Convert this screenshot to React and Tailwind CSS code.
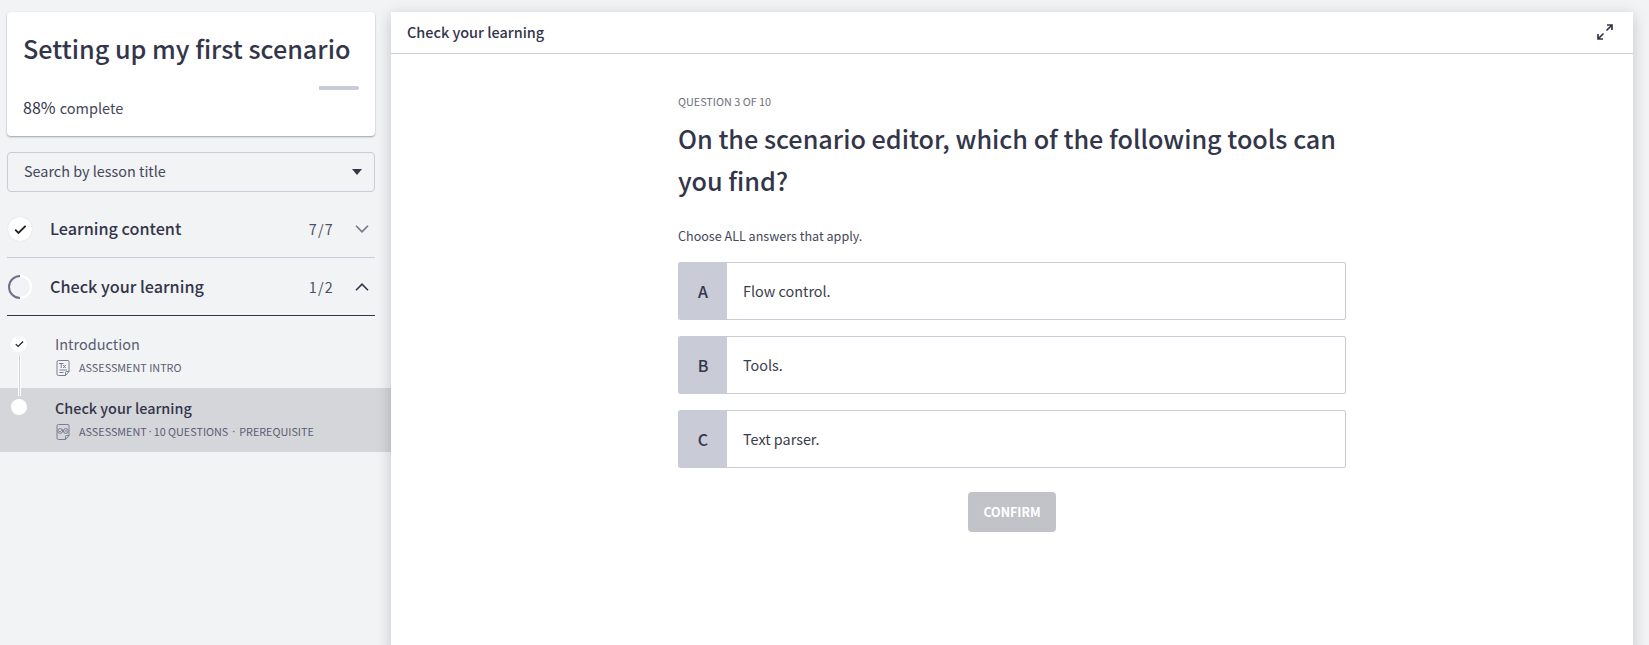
function Sheet({ children }) {
  return (
    <svg viewBox="0 0 14 16" className="ml-px h-4 w-[14px] shrink-0" fill="none" stroke="#7b7d94" strokeWidth="1">
      <path d="M2.500 .5H12a1 1 0 0 1 1 1V11.500L9.500 15.500h-7a1.500 1.500 0 0 1-1.500-1.500V2A1.500 1.500 0 0 1 2.500.5ZM13 11.500h-2.500a1 1 0 0 0-1 1v3" />
      {children}
    </svg>
  );
}

function IntroIcon() {
  return (
    <Sheet>
      <path d="M3 3.500h4.500M5.200 3.500V8M7.200 5l2.500 3M9.700 5 7.200 8M3.500 10h7.500M3.500 12.500h4" />
    </Sheet>
  );
}

function QuizIcon() {
  return (
    <Sheet>
      <circle cx="4.200" cy="7" r="2.400" />
      <circle cx="9.800" cy="7" r="2.400" />
      <path d="M3 7l1 1L6.500 5.500M9 6.200l1.600 1.600M10.600 6.200 9 7.800" strokeWidth=".8" />
    </Sheet>
  );
}

function Tick({ className }) {
  return (
    <svg viewBox="0 0 14 12" className={className} fill="none" stroke="#222" strokeWidth="2">
      <path d="M1.200 6.200 4.800 9.800 12.600 2" />
    </svg>
  );
}

function Chevron({ up }) {
  return (
    <svg viewBox="0 0 14 8" className="ml-[21px] h-2 w-[14px]" fill="none" stroke={up ? "#33354a" : "#72748c"} strokeWidth="1.600">
      <path d={up ? "M1 7.200 7 1.200 13 7.200" : "M1 .8 7 6.800 13 .8"} />
    </svg>
  );
}

function Section({ title, count, open, icon }) {
  return (
    <div
      className={
        open
          ? "mr-4 ml-[7px] flex h-[58px] items-center border-b border-[#33354a] pr-[6px]"
          : "mr-4 ml-[7px] flex h-[58px] items-center border-b border-[#c9cbd6] pr-[6px]"
      }
    >
      {icon}
      <span className="ml-[18px] grow pb-px text-[16.200px] leading-6 font-medium">{title}</span>
      <span className="text-[14.400px] leading-6 tracking-[1.200px] text-[#4d4f63]">{count}</span>
      <Chevron up={open} />
    </div>
  );
}

function Answer({ letter, text }) {
  return (
    <div className="flex h-[58px] overflow-hidden rounded-[2px] border border-[#c9cbd6]">
      <div className="flex w-12 items-center justify-center bg-[#c9cbd6] text-[16px] leading-6 font-medium">{letter}</div>
      <div className="flex items-center pl-4 text-[14.400px] leading-6 text-[#3b3d4c]">{text}</div>
    </div>
  );
}

function Dot({ className }) {
  return <span className={className}>·</span>;
}

export default function App() {
  return (
    <div className="flex h-[645px] w-[1649px] overflow-hidden bg-[#f1f3f5] font-['Noto_Sans_CJK_SC',sans-serif] text-[#33354a]">
      <aside className="w-[391px] shrink-0 pt-3">
        <div className="mr-4 ml-[7px] h-[124px] rounded-[4px] bg-white px-4 pt-[15px] shadow-[0_1px_2px_rgba(0,0,0,0.35)]">
          <h1 className="text-[25.200px] leading-[42px] font-medium whitespace-nowrap">Setting up my first scenario</h1>
          <div className="mt-[17px] flex h-1 justify-end">
            <div className="h-1 w-10 rounded-r-[2px] bg-[#c9cbd6]" />
          </div>
          <p className="mt-[5px] text-[14.500px] leading-6 text-[#45475a]">
            <span className="mr-px text-[16px] text-[#33354a]">88%</span> complete
          </p>
        </div>

        <div className="mt-4 mr-4 ml-[7px] flex h-10 items-center justify-between rounded-[4px] border border-[#c9cbd6] pr-3 pl-4">
          <span className="pb-[2px] text-[14.400px] leading-6 text-[#45475a]">Search by lesson title</span>
          <svg viewBox="0 0 10 6" className="h-[6px] w-[10px]" fill="#33354a">
            <path d="M0 0h10L5 6Z" />
          </svg>
        </div>

        <div className="mt-2">
          <Section
            title="Learning content"
            count="7/7"
            icon={
              <span className="ml-px flex size-6 items-center justify-center rounded-full bg-white shadow-[0_0_1px_rgba(0,0,0,0.2)]">
                <Tick className="mt-px h-[11px] w-[13px]" />
              </span>
            }
          />
          <Section
            title="Check your learning"
            count="1/2"
            open
            icon={
              <svg viewBox="0 0 24 24" className="ml-px size-6" fill="none" strokeWidth="2">
                <path d="M12 1a11 11 0 0 1 0 22" stroke="#fff" />
                <path d="M12 1a11 11 0 0 0 0 22" stroke="#6f7189" />
              </svg>
            }
          />
        </div>

        <div className="flex h-[72px] pt-4">
          <div className="flex w-[55px] flex-col pl-[11px]">
            <span className="mt-1 flex size-4 shrink-0 items-center justify-center rounded-full bg-white">
              <Tick className="h-2 w-[9px]" />
            </span>
            <span className="relative z-10 mt-1 ml-[7px] h-10 w-[3px] shrink-0 border-x border-white bg-[#cfd0d5]" />
          </div>
          <div>
            <div className="text-[14.500px] leading-6 text-[#5b5d73]">Introduction</div>
            <div className="flex h-6 items-center text-[10.800px] leading-6 text-[#5b5d73]">
              <IntroIcon />
              <span className="ml-[9px] pb-[2px]">ASSESSMENT INTRO</span>
            </div>
          </div>
        </div>

        <div className="flex h-16 bg-[#d5d6da] pt-2">
          <div className="w-[55px] pl-[11px]">
            <span className="mt-[3px] block size-4 rounded-full bg-white" />
          </div>
          <div>
            <div className="text-[14.400px] leading-6 font-medium">Check your learning</div>
            <div className="flex h-6 items-center text-[10.800px] leading-6 text-[#5b5d73]">
              <QuizIcon />
              <span className="ml-[9px] pb-[2px]">ASSESSMENT</span>
              <Dot className="mx-[2px] pb-[2px] font-['Noto_Sans']" />
              <span className="pb-[2px]">10 QUESTIONS</span>
              <Dot className="mx-[4px] pb-[2px] font-['Noto_Sans']" />
              <span className="pb-[2px]">PREREQUISITE</span>
            </div>
          </div>
        </div>
      </aside>

      <main className="relative mt-3 h-[640px] w-[1242px] shrink-0 bg-white shadow-[0_4px_14px_rgba(0,0,0,0.2)]">
        <header className="flex h-[42px] items-center justify-between border-b border-[#c9cbd6] pr-5 pb-[2px] pl-4">
          <span className="text-[14.450px] leading-6 font-medium">Check your learning</span>
          <svg viewBox="0 0 16 16" className="size-4" fill="none" stroke="#33354a" strokeWidth="1.700">
            <path d="M10 1h5v5M15 1 9.500 6.500M1 10v5h5M1 15 6.500 9.500" />
          </svg>
        </header>

        <section className="ml-[287px] w-[668px] pt-[38px]">
          <div className="text-[10.800px] leading-[18px] text-[#6d6f7c]">QUESTION 3 OF 10</div>
          <h2 className="mt-[7px] text-[25.200px] leading-[42px] font-medium">
            On the scenario editor, which of the following tools can you find?
          </h2>
          <p className="mt-[25px] text-[12.570px] leading-5 text-[#45475a]">Choose ALL answers that apply.</p>
          <div className="mt-4 flex flex-col gap-4">
            <Answer letter="A" text="Flow control." />
            <Answer letter="B" text="Tools." />
            <Answer letter="C" text="Text parser." />
          </div>
          <div className="mt-6 flex justify-center">
            <button className="h-10 w-[88px] rounded-[4px] bg-[#c2c3c9] text-[12.460px] leading-5 font-bold text-white">CONFIRM</button>
          </div>
        </section>
      </main>
    </div>
  );
}
